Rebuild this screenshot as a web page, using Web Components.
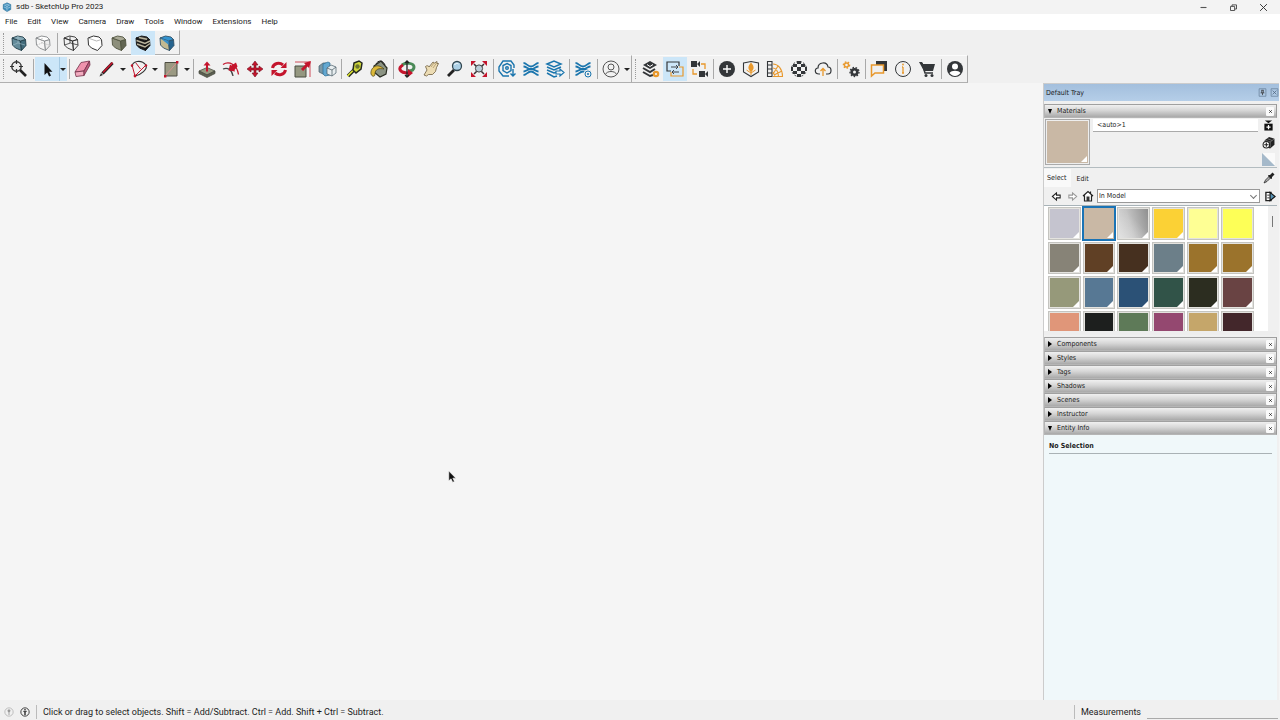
<!DOCTYPE html>
<html lang="en">
<head>
<meta charset="utf-8">
<title>sdb - SketchUp Pro 2023</title>
<style>
html, body { height: 100%; margin: 0; }
body { background: #f5f5f5; color: #1c1c1c; font: 8px/12px Roboto, "Open Sans", sans-serif; overflow: hidden; }
</style>
</head>
<body>
<sketch-app></sketch-app>
<script>
const BLUE = '#1a75ad', RED = '#c4142c', ORG = '#e8982c', INK = '#333639';
const cube = (front, side, top, line) =>
  `<g stroke="${line}" stroke-width=".9" stroke-linejoin="round"><path fill="${front}" d="M5 7 13.500 10 14.500 19.500 8.500 17 5.500 14z"/><path fill="${side}" d="M13.500 10 18.500 8.500 19 14.500 14.500 19.500z"/><path fill="${top}" d="M5 7 10.500 5 16 6 18.500 8.500 13.500 10z"/></g>`;
const person = (c) => `<circle cx="12" cy="12" r="8" fill="none" stroke="${c}"/><circle cx="12" cy="10" r="3" fill="none" stroke="${c}"/><path d="M6.500 17.500c1-4 10-4 11 0" fill="none" stroke="${c}"/>`;
const gear = (x, y, r, c, w) => `<circle cx="${x}" cy="${y}" r="${r}" fill="none" stroke="${c}" stroke-width="${w}"/><circle cx="${x}" cy="${y}" r="${r + w / 2 + .4}" fill="none" stroke="${c}" stroke-width="1.300" stroke-dasharray="1.600 1.500"/>`;
const waves = `<g fill="none" stroke="${BLUE}" stroke-width="1.800"><path d="M4.500 6c3 0 4 3.500 7.500 3.500s4.500-3.500 7.500-3.500M4.500 9.500c3 0 4 2.500 7.500 2.500s4.500-2.500 7.500-2.500M4.500 14.500c3 0 4-2.500 7.500-2.500s4.500 2.500 7.500 2.500M4.500 18c3 0 4-3.500 7.500-3.500s4.500 3.500 7.500 3.500"/></g>`;
const ICONS = {
  app: `<g stroke-linejoin="round" fill="#3b8cba" stroke="#17608f" stroke-width="1.200"><path d="M12 2 21 6 21 18 12 23 3 17V6z"/><path fill="none" stroke="#e7f3fa" d="M5 7l7 3.500L19 7M12 10.500V21M5 12l6 3M14 15l6-3M8 5l8 1"/></g>`,
  xray: cube('#648b9a', '#416b7b', '#86aab7', '#24404b') + '<path d="M6 14l5-2 7 2M11 5v7" stroke="#a6c3cd" stroke-width=".6" fill="none"/>',
  backedges: cube('#f7f7f7', '#eee', '#fff', '#85888a') + '<path d="M6 14l5-2 7 2M11 5v7" stroke="#aaa" stroke-width=".8" stroke-dasharray="1 1" fill="none"/>',
  wire: cube('none', 'none', 'none', '#333') + '<path d="M5.500 14l6-2 7.500 2M11 5v7" stroke="#333" stroke-width=".8" fill="none"/>',
  hidden: `<path d="M5 7 10.500 5 16 6 18.500 8.500 19 14.500 14.500 19.500 8.500 17 5.500 14z" fill="#fff" stroke="#333" stroke-linejoin="round"/><path d="M5 7l8.500 3 5-1.500" fill="none" stroke="#888" stroke-width=".6"/>`,
  shaded: cube('#8d8f7c', '#636653', '#aaaa97', '#50533f'),
  textured: cube('#1c1c1c', '#111', '#333', '#111') + '<path d="M5.500 9.500l8.500 3 5-2.500M6 13l8 3 5-3.500M8 6.500l8 1.700" stroke="#b9b49d" stroke-width="1.400" fill="none"/>',
  mono: cube('#c3b990', '#26648f', '#3494d0', '#315065') + '<path d="M5 7l8.500 3 .4 4z" fill="#398fc7"/>',
  search: `<circle cx="9.500" cy="9.500" r="4.700" fill="#eee" stroke="#333" stroke-width="1.400"/><path d="M13 13l6 6" stroke="#222" stroke-width="2.600"/><path d="M9.500 3v4M9.500 12v4M3 9.500h4M12 9.500h4" stroke="#333" stroke-width="1.200"/>`,
  select: `<path d="M9.500 6v12l2.700-2.500 1.900 4 1.900-.9-1.900-3.800h3.300z" fill="#111"/>`,
  eraser: `<g stroke="#713047" stroke-width=".8" stroke-linejoin="round"><path d="M4 15 10 5.500 18.500 4 13 14z" fill="#ef93ad"/><path d="M4 15l9-1v4.500L5 19.500z" fill="#f3acc0"/><path d="M13 14l5.500-10 .5 4-6 10.500z" fill="#bd5a7c"/></g>`,
  pencil: `<path d="M7.500 16.500 17.500 6" stroke="#222" stroke-width="3.200"/><path d="M8 15.500 17.500 5.500" stroke="${RED}" stroke-width="1.800"/><path d="M4.500 19.500l1.500-3.500 2 2z" fill="#333"/>`,
  arc: `<g fill="none" stroke="${RED}"><path d="M8 19 5 8M8 19l11-11M8.500 5.500l5 6.500"/><path d="M5 10C5 4 14 2 19 8c2 4-5 10-11 11" stroke="#333" stroke-width="1.100"/></g><g fill="${RED}"><circle cx="8" cy="19" r="1.400"/><circle cx="5" cy="8.500" r="1.200"/><circle cx="19" cy="8.500" r="1.200"/></g>`,
  rect: `<path d="M6 5.500h12v13.500H6z" fill="#9b9a83" stroke="#4d4d42"/><path d="M6 19 18 5.500" stroke="#d49490"/><path d="M5 18h2.400v2.400H5zM17 4h2.400v2.400H17z" fill="${RED}"/>`,
  pushpull: `<path d="M4 14l8-3.500 8 3.500-8 4z" fill="#969a82" stroke="#41443a" stroke-width=".7"/><path d="M4 14v2.500l8 4 8-4V14l-8 4z" fill="#5e6253" stroke="#41443a" stroke-width=".7"/><path d="M12 4.500l3.500 4H13v6h-2v-6H8.500z" fill="${RED}"/>`,
  offset: `<g fill="none" stroke="${RED}" stroke-width="1.300"><path d="M4 7.500c6-4 14 0 15.500 10"/><path d="M4 12c5-2 9 1 10 7" stroke="#444"/></g><path d="M9.500 13.500l1.500-6 1.500 1 4.500-3 1.500 4-3 3.500 .5 1.500z" fill="${RED}"/>`,
  move: `<path d="M12 4l3 4h-2v3h3V9l4 3-4 3v-2h-3v3h2l-3 4-3-4h2v-3H8v2l-4-3 4-3v2h3V8H9z" fill="${RED}" stroke="#701423" stroke-width=".6"/>`,
  rotate: `<g fill="none" stroke="${RED}" stroke-width="3"><path d="M5.500 11c1-5 7-6 10.500-3M18.500 13c-1 5-7 6-10.500 3"/></g><path d="M19.500 5v6h-6zM4.500 19v-6h6z" fill="${RED}"/>`,
  scale: `<path d="M4 5h15v15" fill="none" stroke="#ce4c5a"/><path d="M4 9h11v11H4z" fill="#949780" stroke="#494d40"/><path d="M11 13 16 8" stroke="${RED}" stroke-width="3"/><path d="M13 6l7-2-2 7z" fill="${RED}"/>`,
  flip: `<path d="M4 9l4-3h3v10l-3 1-4-2z" fill="#7b98a6" stroke="#455a65" stroke-width=".7"/><path d="M8 7l5-2 2 1v12l-5 1-2-2z" fill="#63a8d1" stroke="#286c94" stroke-width=".7"/><path d="M12 11l4-3 5 2v6l-4 3-5-2z" fill="#e8eef0" stroke="#455a65" stroke-width=".7"/><path d="M12 11l5 2 4-3M17 13v6" stroke="#55656d" fill="none" stroke-width=".8"/>`,
  tape: `<path d="M5 19l7-7" stroke="#252920" stroke-width="3.600"/><path d="M4.500 19l7-7" stroke="#dfe62f" stroke-width="1.600"/><path d="M11 6l5-2 3 2-1 6-5 4-3-3z" fill="#d0d83a" stroke="#25291f" stroke-width="1.500"/><circle cx="14.500" cy="9.500" r="2.200" fill="#6d762f"/>`,
  paint: `<path d="M7 9l7-5 6 7-1 6-6 3-6-5z" fill="#8c9484" stroke="#292d22" stroke-width="1.200"/><path d="M4 17c-1-6 6-12 13-5-5-1-9 0-9 5 0 3-3 3-4 0z" fill="#dcb93a" stroke="#433d17" stroke-width=".7"/><path d="M9 7c2-4 7-4 9 1" fill="none" stroke="#222"/>`,
  orbit: `<path d="M7 8c4-3 12-2 12 2 0 3-3 4-6 4" fill="none" stroke="#4b8b58" stroke-width="3"/><path d="M8 8c-6 3-3 8 5 8" fill="none" stroke="${RED}" stroke-width="3"/><path d="M13 12l5 4-5 4z" fill="${RED}"/><path d="M12 4v16M10 6l2-2 2 2M10 18l2 2 2-2" fill="none" stroke="#222" stroke-width="1.300"/>`,
  pan: `<path d="M5 18 8 13 6.500 9.500C8 8 10 9 10 10l4-5 1.500 1L18 4.500l0 2 1.500 0-2 4-1 4-3 3-4 0-2 1.500z" fill="#ecdcb4" stroke="#6d5d3c" stroke-width=".8"/><path d="M12 10l3-4M14 11l3.500-5" stroke="#9a8150" stroke-width=".6"/>`,
  zoom: `<path d="M5 19l6-6" stroke="#222" stroke-width="2.800"/><circle cx="14" cy="9" r="4.500" fill="#acd0e5" stroke="#31464f" stroke-width="1.300"/><path d="M11.500 8c1-2 3-2 4-1" fill="none" stroke="white"/>`,
  extents: `<path d="M7 7l10 10M17 7 7 17" stroke="#3a3034" stroke-width="1.500"/><circle cx="12" cy="11.500" r="3.600" fill="#b8cdd8" stroke="#444"/><path d="M4 4h5L4 9zM20 4v5l-5-5zM4 20v-5l5 5zM20 20h-5l5-5z" fill="${RED}"/>`,
  warehouse: `<g fill="none" stroke="${BLUE}" stroke-width="1.400"><path d="M19 11V8l-3-4H8L4 10l0 4 4 5h6"/><path d="M12 6.500l4 2v5l-4 2.500-4-2.500v-5z"/><circle cx="12" cy="11" r="1.300"/><path d="M18 12v7M15.500 16.500 18 19l2.500-2.500"/></g>`,
  waves,
  share: `<g fill="none" stroke="${BLUE}" stroke-width="1.500"><path d="M4 7l7-3 7 3-7 3zM4 10l7 3 7-3M4 13l7 3 3-1M4 16l7 4 3-1"/><path d="M13 14h4v-2l4 3.500-4 3.500v-2h-4z" fill="#eef5f8" stroke-width="1.200"/></g>`,
  extwaves: waves + `<circle cx="17" cy="17" r="4.500" fill="#f0f0f0"/><circle cx="17" cy="17" r="3" fill="none" stroke="${BLUE}"/><circle cx="17" cy="17" r="1" fill="${BLUE}"/>`,
  account: person('#555'),
  model: `<path d="M4 8l7-4 7 4-7 4z" fill="${INK}"/><path d="M8 7.500l3 2 3-2" stroke="#fff" fill="none"/><path d="M4 11l7 4 5-3M4 15l7 4 3-1" fill="none" stroke="${INK}" stroke-width="2"/><circle cx="17" cy="17" r="2.200" fill="none" stroke="${ORG}" stroke-width="2.200"/>`,
  sync: `<path d="M8 14H4V5h12v4" fill="none" stroke="${INK}" stroke-width="1.200"/><path d="M16 10h4v9H8v-4" fill="none" stroke="${ORG}" stroke-width="1.200"/><path d="M8 10h7M13 8l2 2-2 2M16 15H9M11 13l-2 2 2 2" stroke="${INK}" fill="none" stroke-width=".9"/>`,
  cameras: `<path d="M4 4h6v6H4zM10 7l3-3v6zM12 14h6v6h-6zM18 17l3-3v6z" fill="${INK}"/><path d="M14 7h4v5M6 12v5h4" fill="none" stroke="${ORG}" stroke-width="1.300"/>`,
  plus: `<circle cx="12" cy="12" r="8" fill="${INK}"/><path d="M12 8v8M8 12h8" stroke="#fff" stroke-width="1.400"/>`,
  book: `<path d="M4.500 6 12 4.500 19.500 6v9L12 19.500 4.500 15z" fill="none" stroke="${INK}" stroke-width="1.100"/><path d="M12 5.500c-3.500 4-3.500 6.500 0 9.500 3.500-3 3.500-5.500 0-9.500z" fill="${ORG}"/><path d="M12 12v6M7.500 13l4.500 3 4.500-3" stroke="${ORG}" fill="none"/>`,
  palette: `<path d="M4.500 4.500h4.500v15H4.500zM4.500 8h4.500M4.500 12h4.500M4.500 16h4.500" fill="none" stroke="${INK}" stroke-width="1.100"/><path d="M10 7c5 0 9.500 5 9.500 12.500H10M10 11c3 0 5.500 4 5.500 8.500M10 15l2 4M10 17l5-8M11 18l8-4" fill="none" stroke="${ORG}" stroke-width="1.100"/>`,
  checker: `<path d="M10 4h4v3h-4zM6 7h4v3H6zM14 7h4v3h-4zM4 10h2v4H4zM10 10h4v4h-4zM18 10h2v4h-2zM6 14h4v3H6zM14 14h4v3h-4zM10 17h4v3h-4z" fill="${INK}"/><circle cx="12" cy="12" r="7.500" fill="none" stroke="${INK}" stroke-dasharray="2 1.600"/>`,
  cloud: `<path d="M9 17H8c-5 0-4.500-6-1-6 0-6 9-7 10-1 4 0 4 7 0 7h-2" fill="none" stroke="${INK}" stroke-width="1.200"/><path d="M12 19v-7M9.500 14l2.500-2.500 2.500 2.500" fill="none" stroke="${ORG}" stroke-width="1.300"/>`,
  gears: gear(7.5, 8, 2, ORG, 1.4) + gear(15.5, 15, 2.8, INK, 2.6),
  chat: `<path d="M9 4h11v10h-3V8H9z" fill="${INK}"/><path d="M4.500 8h12v8H8l-3.500 3z" fill="#f0f0f0" stroke="${ORG}" stroke-width="1.500"/>`,
  info: `<circle cx="12" cy="12" r="7.500" fill="none" stroke="${INK}"/><path d="M12 10v6M11 10h1M11 16h2" stroke="${ORG}" stroke-width="1.300"/><circle cx="12" cy="7.500" r=".9" fill="${ORG}"/>`,
  cart: `<path d="M4 5h3l1 2h12l-2 7H9z" fill="${INK}"/><path d="M7 6l3 10h8" fill="none" stroke="${INK}" stroke-width="1.500"/><circle cx="11" cy="18.500" r="1.500" fill="${INK}"/><circle cx="17" cy="18.500" r="1.500" fill="${INK}"/>`,
  user: `<circle cx="12" cy="12" r="8" fill="${INK}"/><circle cx="12" cy="9.500" r="3" fill="#fff"/><path d="M6.500 16c2-3 9-3 11 0-3 4-8 4-11 0z" fill="#fff"/>`,
  min: `<path d="M4 12h16" stroke="#555" stroke-width="3"/>`,
  restore: `<path d="M4 9h11v11H4zM8 9V5h12v11h-5" fill="none" stroke="#444" stroke-width="2.400"/>`,
  close: `<path d="M3 3l18 18M21 3 3 21" stroke="#333" stroke-width="2.600"/>`,
  pin: `<path d="M3 2h18v20H3z" fill="none" stroke="#68809b" stroke-width="2"/><path d="M9 6h6M10 6v7M14 6v7M7 13h10M12 13v6" stroke="#333" stroke-width="2"/>`,
  boxclose: `<path d="M3 2h18v20H3z" fill="none" stroke="#68809b" stroke-width="2"/><path d="M7 7l10 10M17 7 7 17" stroke="#4f647c" stroke-width="2"/>`,
  x: `<path d="M6 6l12 12M18 6 6 18" stroke="#222" stroke-width="4"/>`,
  addpane: `<path d="M4 1h16l-8 6z" fill="#111"/><path d="M3 8h18v15H3z" fill="#111"/><path d="M12 11v9M7.500 15.500h9" stroke="#fff" stroke-width="2.600"/>`,
  newmat: `<path d="M5 8l8-6 10 3v11l-8 7-10-3z" fill="#222"/><path d="M6 8l9 3 7-5M15 11v10M10 5l8 3" stroke="#aaa" fill="none"/><circle cx="8" cy="16" r="6" fill="#fff" stroke="#222" stroke-width="2"/><path d="M8 12v8M4 16h8" stroke="#222" stroke-width="2"/>`,
  corner: `<path d="M0 0h24v24z" fill="#fafafa"/><path d="M0 0v24h24z" fill="#a5b9ca"/>`,
  dropper: `<path d="M2 22l3-6 8-8 3 3-8 8z" fill="#aaa" stroke="#222" stroke-width="1.500"/><path d="M11 6l3 0 5-5 4 4-5 5v3l-2 1-6-6z" fill="#222"/>`,
  back: `<path d="M3 12l9-8v5h8v6h-8v5z" fill="#fff" stroke="#222" stroke-width="2.300"/>`,
  forward: `<path d="M21 12l-9-8v5H4v6h8v5z" fill="#fff" stroke="#999" stroke-width="2.300"/>`,
  home: `<path d="M2 12 12 3l10 9M5 11v11h14V11M17 7V3" fill="#fff" stroke="#222" stroke-width="2.400"/><path d="M9 13h6v9H9z" fill="#333"/>`,
  details: `<path d="M2 3h11v18H2z" fill="#fff" stroke="#222" stroke-width="3"/><path d="M5 9h5M5 15h5" stroke="#222" stroke-width="2"/><path d="M11 3l11 9-11 9z" fill="#5793b6" stroke="#111" stroke-width="2.500"/>`,
  geo: `<circle cx="12" cy="12" r="10" fill="none" stroke="#aaa" stroke-width="1.700"/><path d="M12 6c-5 0-4 5-1 7v6h2v-6c3-2 4-7-1-7z" fill="#999"/>`,
  help: `<circle cx="12" cy="12" r="10" fill="none" stroke="#222" stroke-width="2"/><circle cx="12" cy="6.500" r="2" fill="#222"/><path d="M8 10h8l-3 3v6h-2v-6z" fill="#222" stroke="#222"/>`,
  cursor: `<path d="M7 2v18l4.200-3.800 3 6.400 3.200-1.500-3-6.100h5.600z" fill="#111" stroke="#fff" stroke-width="1"/>`
};

function define(name, html, setup) {
  const t = document.createElement('template');
  t.innerHTML = html;
  customElements.define(name, class extends HTMLElement {
    constructor() {
      super();
      this.attachShadow({ mode: 'open' }).append(t.content.cloneNode(true));
    }
    connectedCallback() { if (setup) setup(this, this.shadowRoot); }
  });
}
const reset = `*{box-sizing:border-box} button{appearance:none;border:0;background:none;padding:0;margin:0;font:inherit;color:inherit;display:flex;align-items:center;justify-content:center}`;

define('ui-icon', `<style>:host{display:block;width:var(--icon,24px);height:var(--icon,24px);flex:none}svg{display:block;width:100%;height:100%}</style><svg viewBox="0 0 24 24" aria-hidden="true"></svg>`,
  (el, root) => { root.querySelector('svg').innerHTML = ICONS[el.getAttribute('name')]; });

define('icon-button', `<style>${reset}:host{display:block;flex:none}button{width:100%;height:100%}</style><button></button>`,
  (el, root) => {
    const b = root.querySelector('button'), icon = el.getAttribute('icon');
    b.setAttribute('aria-label', el.getAttribute('label') || icon);
    b.innerHTML = `<ui-icon name="${icon}"></ui-icon>`;
  });

define('tool-button', `<style>${reset}:host{display:flex;height:24px;flex:none}
  .main{width:24px}.more{width:8px;display:none;padding-right:1px}:host([menu]) .more{display:flex}
  :host([active]) button{background:#cce6f8}
  :host([active][menu]) .more{border-left:1px solid #a5c9e2;padding-right:2px}
  .more::after{content:"";border:3px solid transparent;border-top:3px solid #222;border-bottom:0;flex:none}</style>
  <button class="main"></button><button class="more" aria-label="More"></button>`,
  (el, root) => {
    const b = root.querySelector('.main');
    b.setAttribute('aria-label', el.getAttribute('icon'));
    b.innerHTML = `<ui-icon name="${el.getAttribute('icon')}"></ui-icon>`;
  });

define('tool-sep', `<style>:host{display:flex;width:4px;height:20px;justify-content:center;flex:none}i{width:1px;background:#a9a9a9}</style><i></i>`);

define('tool-bar', `<style>:host{display:flex;align-items:center;width:max-content;height:var(--bar,28px);box-sizing:border-box;background:#f1f1f1;border-right:1px solid #aaa;border-bottom:1px solid #b0b0b0;border-top:1px solid #fbfbfb}
  .grip{width:7px;height:20px;flex:none;display:flex;justify-content:center}.grip::after{content:"";border-left:1px dotted #999}</style>
  <span class="grip"></span><slot></slot>`);

define('title-bar', `<style>${reset}:host{display:flex;align-items:center;height:14px;background:#f3f3f3;padding:0 12px 0 2px;gap:4px;font-size:8px;line-height:14px;--icon:10px}
  span{flex:1}nav{display:flex;gap:20px}icon-button{width:10px;height:14px;--icon:9px}</style>
  <ui-icon name="app"></ui-icon><span>sdb - SketchUp Pro 2023</span>
  <nav><icon-button icon="min" label="Minimize"></icon-button><icon-button icon="restore" label="Restore"></icon-button><icon-button icon="close" label="Close"></icon-button></nav>`);

define('menu-bar', `<style>${reset}:host{display:flex;height:16px;background:#fff;padding-left:5px;gap:10px;font-size:8px}</style>
  ${['File', 'Edit', 'View', 'Camera', 'Draw', 'Tools', 'Window', 'Extensions', 'Help'].map(m => `<button>${m}</button>`).join('')}`);

const tools = (s) => s.split(' ').map(n => n === '|' ? '<tool-sep></tool-sep>'
  : `<tool-button icon="${n.replace(/[+*]/g, '')}"${n.includes('+') ? ' menu' : ''}${n.includes('*') ? ' active' : ''}></tool-button>`).join('');

define('tray-section', `<style>${reset}:host{display:block}
  header{display:flex;align-items:center;height:14px;padding:0 2px 0 3px;border:1px solid #b5b5b5;border-top-color:#a0a0a0;border-right-color:#999;background:linear-gradient(#f0f0f0,#d6d6d6 45%,#a9a9a9)}
  .t{flex:1;justify-content:flex-start;gap:4px;height:12px;line-height:12px}
  .t::before{content:"";width:0;border:3px solid transparent;border-left:4px solid #000;border-right:0;margin-right:1px}
  :host([open]) .t::before{border:2px solid transparent;border-top:5px solid #000;border-bottom:0}
  icon-button{width:8px;height:9px;background:#fafafa;border-radius:1px;--icon:5px}
  .body{display:none}:host([open]) .body{display:block}</style>
  <header><button class="t"></button><icon-button icon="x" label="Close"></icon-button></header><div class="body"><slot></slot></div>`,
  (el, root) => { root.querySelector('.t').textContent = el.getAttribute('label'); });

define('material-swatch', `<style>${reset}:host{display:block;aspect-ratio:1;padding:1px;box-sizing:border-box;background:#fff}
  button{width:100%;height:100%;background:var(--c);border:1px solid #c4c4c0;outline:1px solid #e4e3df;outline-offset:-2px;align-items:flex-end;justify-content:flex-end;padding:1px}
  :host([selected]){padding:0}:host([selected]) button{border:2px solid #1a73b5;outline:0}
  :host([tex]) button::after{content:"";border:3px solid transparent;border-right-color:#fff;border-bottom-color:#fff}</style><button aria-label="Material"></button>`,
  (el) => { el.style.setProperty('--c', el.getAttribute('fill')); });

const swatches = [['#c5c4cf', 1], ['#c9b8a5', 1], ['linear-gradient(45deg,#ffffff66,#fff0 60%),linear-gradient(75deg,#d2d2d2,#c4c4c4 40%,#8c8c8c)', 1], ['#fbd135', 1], ['#feff94', 0], ['#fdff57', 0],
  ['#878377', 1], ['#604025', 1], ['#46301f', 1], ['#6c7f89', 1], ['#9b732c', 1], ['#9b732c', 1],
  ['#96997a', 1], ['#577894', 1], ['#2b5176', 1], ['#315348', 1], ['#2c2d20', 1], ['#694343', 1],
  ['#e09679', 1], ['#1d1f1e', 1], ['#5e7a58', 1], ['#944870', 1], ['#c5a66a', 1], ['#43272b', 1]];

define('materials-panel', `<style>${reset}:host{display:block;background:#f0f0f0;--icon:11px}
  .top{display:grid;grid-template-columns:45px 1fr 14px;gap:3px;height:50px;padding:1px 1px 2px 1px;border-bottom:1px solid #b3bcc0}
  .preview{height:46px;width:45px;border:1px solid #aaa;background:#c9b8a5;outline:1px solid #eee;outline-offset:-2px;display:flex;align-items:flex-end;justify-content:flex-end;padding:2px}
  .preview::after{content:"";border:3px solid transparent;border-right-color:#fff;border-bottom-color:#fff}
  input{width:calc(100% - 1px);height:13px;border:0;border-bottom:1px solid #aaa;background:#fff;font:inherit;color:inherit;padding:0 4px;outline:0}
  .side{display:flex;flex-direction:column;gap:4px}.side icon-button{width:12px;height:13px}.side .c{--icon:13px}.side icon-button:nth-child(2){--icon:13px}
  .tabs{display:flex;align-items:center;height:20px;padding-right:2px}
  .tabs button{height:18px;padding:1px 4px 0 5px}.tabs .on{background:#f9f9f9;padding:0 5px 0 3px}.tabs b{flex:1}
  .tabs icon-button{--icon:12px;width:12px;height:16px}
  .nav{display:flex;align-items:center;height:17px;gap:4px;padding:0 1px 1px 6px}
  .nav icon-button{width:12px;height:12px}.pick{flex:1;display:flex;align-items:center;background:#fff;border:1px solid #999;height:14px;margin-left:-1px;position:relative}
  select{appearance:none;border:0;background:none;font:inherit;color:inherit;width:100%;padding:0 1px;outline:0}
  .pick::after{content:"";width:4px;height:4px;border:solid #777;border-width:0 1px 1px 0;transform:rotate(45deg);flex:none;margin:0 3px 2px 0}
  .list{display:flex;height:130px;background:#fff;border-top:1px solid #a8b3b8;overflow:hidden;border-bottom:4px solid #eee}
  .grid{width:208px;margin-left:3px;display:grid;grid-template-columns:repeat(6,1fr);align-content:start}
  .bar{margin-left:auto;width:9px;background:#f0f0f0;padding:10px 4px}.bar::after{content:"";display:block;width:1px;height:11px;background:#777}</style>
  <div class="top"><div class="preview"></div><div><input aria-label="Material name" value="&lt;auto&gt;1"></div>
  <div class="side"><icon-button icon="addpane"></icon-button><icon-button icon="newmat"></icon-button><icon-button class="c" icon="corner"></icon-button></div></div>
  <div class="tabs"><button class="on">Select</button><button>Edit</button><b></b><icon-button icon="dropper"></icon-button></div>
  <div class="nav"><icon-button icon="back"></icon-button><icon-button icon="forward"></icon-button><icon-button icon="home" style="--icon:12px"></icon-button>
  <label class="pick"><select aria-label="Library"><option>In Model</option></select></label><icon-button icon="details"></icon-button></div>
  <div class="list"><div class="grid">${swatches.map(([c, t], i) => `<material-swatch fill="${c}"${t ? ' tex' : ''}${i === 1 ? ' selected' : ''}></material-swatch>`).join('')}</div><div class="bar"></div></div>`);

define('default-tray', `<style>${reset}:host{display:flex;flex-direction:column;width:236px;flex:none;box-sizing:border-box;border-left:1px solid #ccc;border-top:1px solid #ccc;background:#f0f0f0;font:7px/12px "DejaVu Sans Condensed","DejaVu Sans",sans-serif;margin-right:1px}
  h2{font:inherit;margin:0;flex:1}
  .head{display:flex;align-items:center;height:17px;padding:0 1px 0 2px;gap:4px;background:linear-gradient(#a3bfdd,#b5cee8);--icon:9px;margin-bottom:3px}
  .head icon-button{width:8px;height:12px}
  .sections{flex:1;display:flex;flex-direction:column;padding:0 2px 0 0}
  .last{flex:1;background:#f0f8fa}
  .mat{margin-bottom:2px}
  p{margin:0 5px 0 5px;font-weight:bold;padding:5px 0 1px;border-bottom:1px solid #aab2b5}</style>
  <div class="head"><h2>Default Tray</h2><icon-button icon="pin"></icon-button><icon-button icon="boxclose" label="Close"></icon-button></div>
  <div class="sections"><tray-section class="mat" label="Materials" open><materials-panel></materials-panel></tray-section>
  ${['Components', 'Styles', 'Tags', 'Shadows', 'Scenes', 'Instructor'].map(l => `<tray-section label="${l}"></tray-section>`).join('')}
  <tray-section class="last" label="Entity Info" open><p>No Selection</p></tray-section></div>`);

define('status-bar', `<style>:host{display:flex;align-items:center;height:20px;background:#f0f0f0;font-size:9px;line-height:14px;padding:3px 2px 0 4px;gap:6px;--icon:10px;box-sizing:border-box}
  i{width:1px;height:14px;background:#bbb}.m{flex:1}.v{width:131px;height:15px;border-bottom:1px solid #aaa;box-sizing:border-box}</style>
  <ui-icon name="geo"></ui-icon><ui-icon name="help"></ui-icon><i></i><span class="m">Click or drag to select objects. Shift = Add/Subtract. Ctrl = Add. Shift + Ctrl = Subtract.</span><i></i><span>Measurements</span><span class="v"></span>`);

define('sketch-app', `<style>:host{display:flex;flex-direction:column;height:100vh}
  .bars{background:#f0f0f0}.row{display:flex}
  main{flex:1;display:flex;min-height:0}
  .canvas{flex:1;position:relative;background:#f5f5f5}
  .canvas ui-icon{position:absolute;left:445px;top:387px;--icon:13px}</style>
  <title-bar></title-bar><menu-bar></menu-bar>
  <div class="bars"><tool-bar style="--bar:25px">${tools('xray backedges | wire hidden shaded textured* mono')}</tool-bar>
  <div class="row"><tool-bar>${tools('search | select+* | eraser pencil+ arc+ rect+ | pushpull offset move rotate scale flip | tape paint | orbit pan zoom extents | warehouse waves share | extwaves | account+')}</tool-bar>
  <tool-bar>${tools('model sync* cameras | plus book palette checker cloud | gears | chat info cart | user')}</tool-bar></div></div>
  <main><div class="canvas"><ui-icon name="cursor"></ui-icon></div><default-tray></default-tray></main>
  <status-bar></status-bar>`);
</script>
</body>
</html>
